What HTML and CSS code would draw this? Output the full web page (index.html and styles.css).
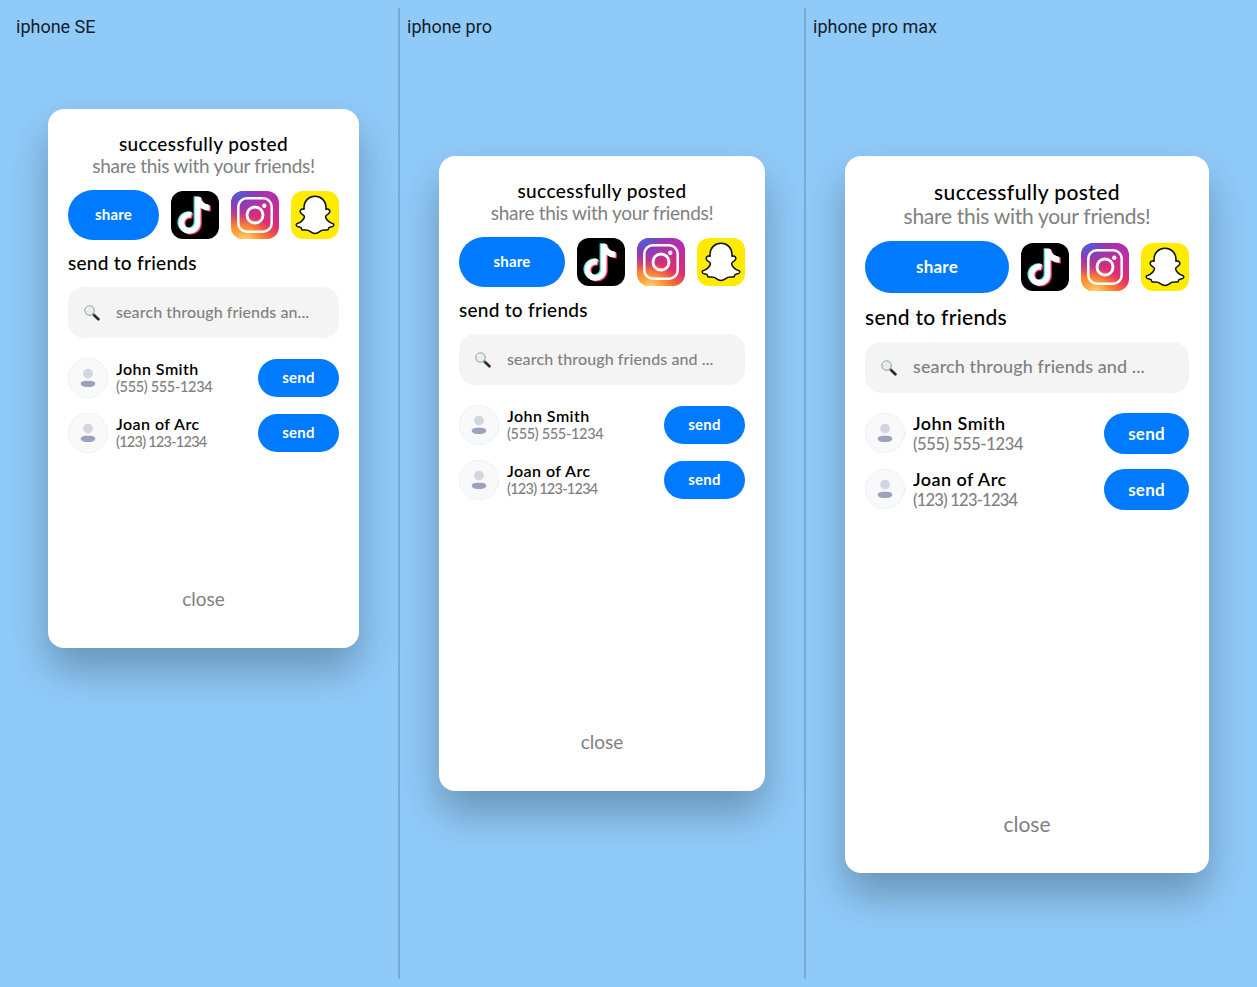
FILE: index.html
```html
<!DOCTYPE html>
<html lang="en">
<head>
<meta charset="utf-8">
<title>Share preview</title>
<link rel="stylesheet" href="styles.css">
</head>
<body>
<svg class="defs" aria-hidden="true">
  <defs>
    <linearGradient id="ig-base" x1="0.2" y1="1" x2="0.65" y2="0">
      <stop offset="0" stop-color="#ffb13d"/><stop offset=".22" stop-color="#f8702f"/><stop offset=".48" stop-color="#df2d70"/><stop offset="1" stop-color="#b02fae"/>
    </linearGradient>
    <radialGradient id="ig-warm" cx=".3" cy="1.05" r=".55">
      <stop offset="0" stop-color="#ffdc85"/><stop offset=".4" stop-color="#ffab42" stop-opacity=".8"/><stop offset="1" stop-color="#f7772e" stop-opacity="0"/>
    </radialGradient>
    <radialGradient id="ig-cool" cx=".12" cy="0" r=".7">
      <stop offset="0" stop-color="#4566da"/><stop offset=".4" stop-color="#7443c8" stop-opacity=".85"/><stop offset="1" stop-color="#a034b8" stop-opacity="0"/>
    </radialGradient>
    <g id="note">
      <path d="M26.700 6v25.800a8.100 8.100 0 1 1-6.300-7.900" fill="none" stroke="currentColor" stroke-width="5.600"/>
      <path d="M24 6h5.500c.8 4.200 3.700 7.200 9 7.900v5.700c-3.600-.1-6.600-1.200-9-3z" fill="currentColor"/>
    </g>
    <symbol id="tiktok" viewBox="0 0 48 48">
      <rect width="48" height="48" fill="#000"/>
      <use href="#note" color="#ef3f66" x="1.300" y=".9"/>
      <use href="#note" color="#55e6e2" x="-1.300" y="-.6"/>
      <use href="#note" color="#fff"/>
    </symbol>
    <symbol id="instagram" viewBox="0 0 48 48">
      <rect width="48" height="48" fill="url(#ig-base)"/>
      <rect width="48" height="48" fill="url(#ig-warm)"/>
      <rect width="48" height="48" fill="url(#ig-cool)"/>
      <rect x="7.300" y="7.300" width="33.400" height="33.400" rx="8.500" fill="none" stroke="#fff" stroke-width="2.500"/>
      <circle cx="24" cy="24" r="8" fill="none" stroke="#fff" stroke-width="2.900"/>
      <circle cx="33.300" cy="14.700" r="2.200" fill="#fff"/>
    </symbol>
    <symbol id="snapchat" viewBox="0 0 48 48">
      <rect width="48" height="48" fill="#ffeb00"/>
      <path d="M24 5.300c-6.200 0-10.900 4.700-11 10.600l.1 2.300c-1.500-.7-4 .1-4 2.300 0 2.600 3.600 2.700 4.200 4.700.7 2.500-3.700 6.700-7.400 7.600-1 .4-.8 1.900.2 2.500 1.300.7 3.300.7 4 1.400.5.7.2 1.900 1.200 2.300 1.400.4 3.400-.6 5.900.4 2.300 1 3.500 3.100 6.800 3.100s4.500-2.100 6.800-3.100c2.500-1 4.500 0 5.900-.4 1-.4.7-1.600 1.200-2.300.7-.7 2.700-.7 4-1.400 1-.6 1.200-2.100.2-2.500-3.700-.9-8.100-5.100-7.400-7.600.6-2 4.200-2.100 4.200-4.700 0-2.200-2.500-3-4-2.300l.1-2.300C34.900 10 30.200 5.300 24 5.300z" fill="#fff" stroke="#111" stroke-width="1.500" stroke-linejoin="round"/>
    </symbol>
    <symbol id="search" viewBox="0 0 17 17">
      <path d="M10.300 10.300l5 4.900" stroke="#282c2f" stroke-width="2.800" stroke-linecap="round"/>
      <path d="M9 9l1.700 1.700" stroke="#777" stroke-width="1.400"/>
      <circle cx="5.900" cy="5.900" r="5" fill="#e6eeee" stroke="#81898c" stroke-width=".9"/>
      <path d="M2.500 5.500a3.500 3.500 0 0 1 3-3.100" fill="none" stroke="#fff" stroke-width="1.100"/>
    </symbol>
    <symbol id="avatar" viewBox="0 0 40 40">
      <circle cx="20" cy="20" r="19.600" fill="#f9f9fa" stroke="#c9effc" stroke-width=".8" stroke-dasharray="3 1.500"/>
      <circle cx="20" cy="15.600" r="4.900" fill="#d3d5e0"/>
      <rect x="12.700" y="22.700" width="14.600" height="6.300" rx="5.500" ry="3.150" fill="#9ca1be"/>
    </symbol>
  </defs>
</svg>
<main class="board">
  <section class="phone phone-se">
    <h2 class="device">iphone SE</h2>
    <article class="card">
      <header class="intro"><h3 class="title"><span>successfully posted</span></h3><p class="subtitle"><span>share this with your friends!</span></p></header>
      <div class="share-row"><button class="btn share">share</button><svg class="app"><use href="#tiktok"/></svg><svg class="app"><use href="#instagram"/></svg><svg class="app"><use href="#snapchat"/></svg></div>
      <h3 class="heading">send to friends</h3>
      <div class="search"><svg class="glass"><use href="#search"/></svg><span class="hint">search through friends an...</span></div>
      <ul class="friends">
        <li class="friend"><svg class="avatar"><use href="#avatar"/></svg><div class="who"><span class="name">John Smith</span><span class="tel">(555) 555-1234</span></div><button class="btn send">send</button></li>
        <li class="friend"><svg class="avatar"><use href="#avatar"/></svg><div class="who"><span class="name">Joan of Arc</span><span class="tel tel-narrow">(123) 123-1234</span></div><button class="btn send">send</button></li>
      </ul>
      <div class="close">close</div>
    </article>
  </section>
  <div class="divider"></div>
  <section class="phone phone-pro">
    <h2 class="device">iphone pro</h2>
    <article class="card">
      <header class="intro"><h3 class="title"><span>successfully posted</span></h3><p class="subtitle"><span>share this with your friends!</span></p></header>
      <div class="share-row"><button class="btn share">share</button><svg class="app"><use href="#tiktok"/></svg><svg class="app"><use href="#instagram"/></svg><svg class="app"><use href="#snapchat"/></svg></div>
      <h3 class="heading">send to friends</h3>
      <div class="search"><svg class="glass"><use href="#search"/></svg><span class="hint">search through friends and ...</span></div>
      <ul class="friends">
        <li class="friend"><svg class="avatar"><use href="#avatar"/></svg><div class="who"><span class="name">John Smith</span><span class="tel">(555) 555-1234</span></div><button class="btn send">send</button></li>
        <li class="friend"><svg class="avatar"><use href="#avatar"/></svg><div class="who"><span class="name">Joan of Arc</span><span class="tel tel-narrow">(123) 123-1234</span></div><button class="btn send">send</button></li>
      </ul>
      <div class="close">close</div>
    </article>
  </section>
  <div class="divider"></div>
  <section class="phone phone-max">
    <h2 class="device">iphone pro max</h2>
    <article class="card">
      <header class="intro"><h3 class="title"><span>successfully posted</span></h3><p class="subtitle"><span>share this with your friends!</span></p></header>
      <div class="share-row"><button class="btn share">share</button><svg class="app"><use href="#tiktok"/></svg><svg class="app"><use href="#instagram"/></svg><svg class="app"><use href="#snapchat"/></svg></div>
      <h3 class="heading">send to friends</h3>
      <div class="search"><svg class="glass"><use href="#search"/></svg><span class="hint">search through friends and ...</span></div>
      <ul class="friends">
        <li class="friend"><svg class="avatar"><use href="#avatar"/></svg><div class="who"><span class="name">John Smith</span><span class="tel">(555) 555-1234</span></div><button class="btn send">send</button></li>
        <li class="friend"><svg class="avatar"><use href="#avatar"/></svg><div class="who"><span class="name">Joan of Arc</span><span class="tel tel-narrow">(123) 123-1234</span></div><button class="btn send">send</button></li>
      </ul>
      <div class="close">close</div>
    </article>
  </section>
</main>
</body>
</html>
```
FILE: styles.css
```css
* { box-sizing: border-box; }
body { margin: 0; background: #90caf9; font-family: Lato, "Open Sans", sans-serif; color: #000; }
h2, h3, p, ul { margin: 0; padding: 0; font-weight: 500; }
.defs { position: absolute; width: 0; height: 0; }
.board { display: flex; height: 987px; padding: 8px 16px; gap: 7px; overflow: hidden; }
.divider { flex: none; width: 2px; background: #7aabd3; }

.phone { flex: none; display: flex; flex-direction: column; }
.phone-se { width: 375px; --card-top: 71px; --card-height: 539px; }
.phone-pro { width: 390px; --card-top: 118px; --card-height: 635px; }
.phone-max { width: 428px; --card-top: 118px; --card-height: 717px; }
.device { height: 30px; padding-top: 8px; font: 400 18px/22px Roboto, sans-serif; color: #14202a; white-space: nowrap; }

.card {
  display: flex; flex-direction: column;
  height: var(--card-height); margin: var(--card-top) 32px 0; padding: 24px 20px 38px;
  border-radius: 16px; background: #fff;
  box-shadow: 0 22px 40px rgba(0,0,0,.27);
  white-space: nowrap;
}
.intro { text-align: center; }
.title, .subtitle { font-size: 19px; line-height: 22px; }
.title { letter-spacing: .42px; }
.subtitle { color: #808080; font-weight: 400; letter-spacing: -.28px; }
.share-row { display: flex; align-items: center; gap: 12px; margin-top: 13px; }
.btn { display: block; padding: 0 0 2px; border: 0; border-radius: 30px; background: #007aff; color: #fff; font-family: inherit; font-weight: 700; font-size: 15px; letter-spacing: .2px; }
.share { flex: 1; height: 50px; }
.app { width: 48px; height: 48px; border-radius: 12px; }
.heading { margin-top: 12px; font-size: 19px; line-height: 22px; letter-spacing: .27px; }
.search { display: flex; align-items: center; height: 51px; margin-top: 13px; padding-left: 16px; border-radius: 16px; background: #f4f4f4; }
.glass { width: 16px; height: 16px; }
.hint { margin-left: 16px; padding-bottom: 3px; font-size: 16px; font-weight: 500; letter-spacing: .1px; color: #808080; }
.friends { display: grid; gap: 15px; margin-top: 20px; list-style: none; }
.friend { display: flex; align-items: center; height: 40px; }
.avatar { width: 40px; height: 40px; }
.who { display: flex; flex-direction: column; flex: 1; margin: -1px 0 0 8px; }
.name { font-size: 16px; line-height: 18px; font-weight: 600; letter-spacing: .45px; }
.tel { font-size: 14.5px; line-height: 17px; letter-spacing: -.33px; color: #808080; }
.tel-narrow { letter-spacing: -.75px; }
.send { width: 81px; height: 38px; }
.close { margin-top: auto; text-align: center; font-size: 19px; line-height: 22px; color: #808080; }

.phone-max .title, .phone-max .subtitle { font-size: 21px; line-height: 24px; }
.phone-max .share { height: 52px; font-size: 17px; }
.phone-max .heading { font-size: 21px; line-height: 24px; }
.phone-max .hint { font-size: 18px; }
.phone-max .friends { gap: 16px; }
.phone-max .who { margin-top: 1px; }
.phone-max .name { font-size: 18px; line-height: 21px; }
.phone-max .tel { font-size: 16.5px; line-height: 20px; }
.phone-max .send { width: 85px; height: 41px; padding-bottom: 0; font-size: 17px; }
.phone-max .close { font-size: 21px; line-height: 22px; }
```
